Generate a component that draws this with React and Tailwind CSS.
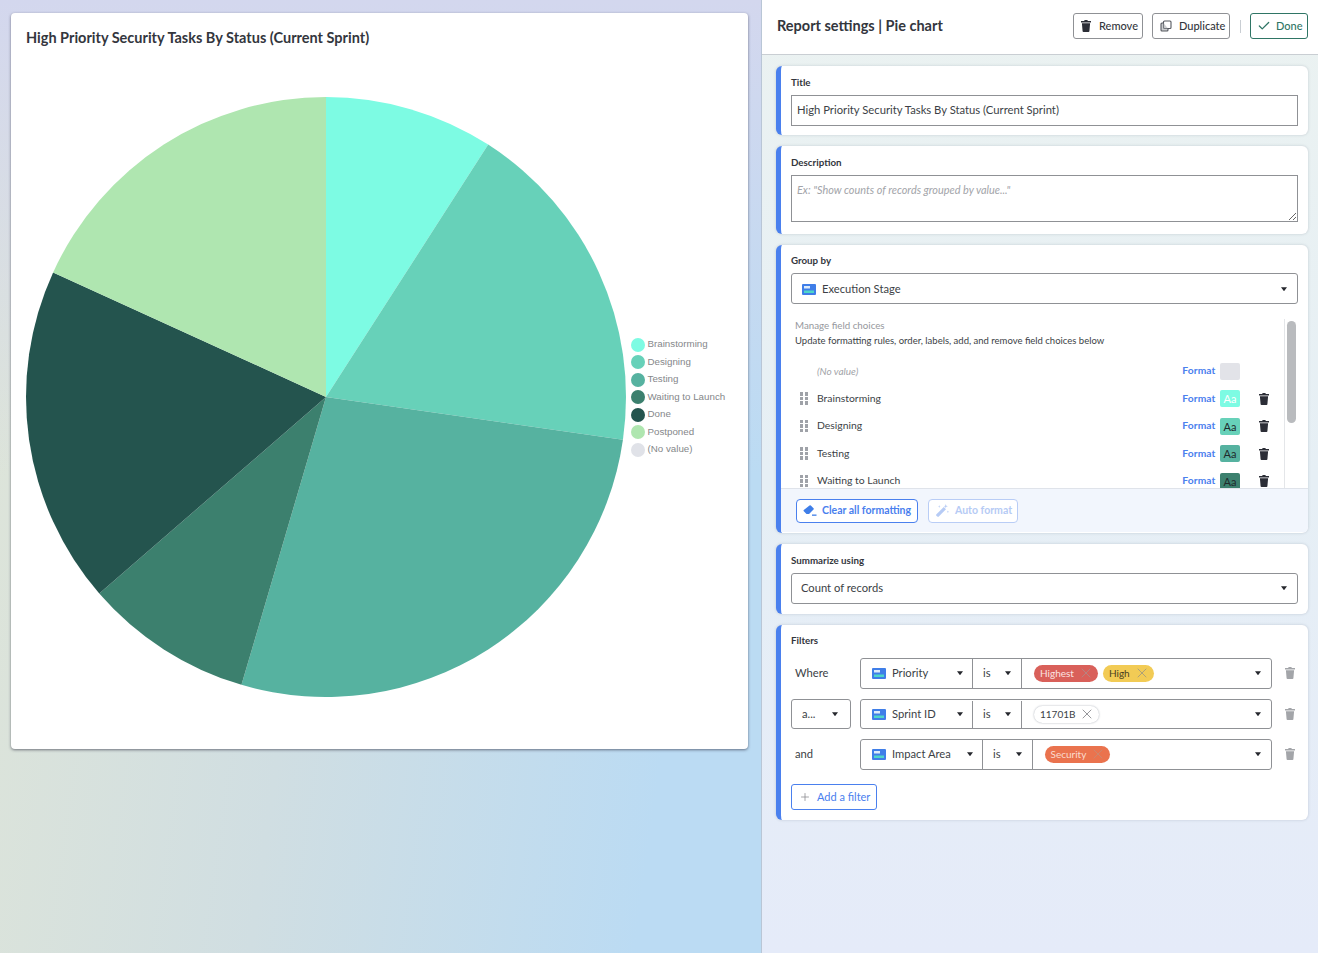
import React from "react";
import { Check, Plus, X } from "lucide-react";

const slices = [
  { v: 1, c: "#7DFBE3" },
  { v: 2, c: "#67D1B9" },
  { v: 3, c: "#56B2A0" },
  { v: 1, c: "#3C806E" },
  { v: 2, c: "#24544E" },
  { v: 2, c: "#AFE6B0" },
];
const legend = [
  ["Brainstorming", "bg-[#7DFBE3]"],
  ["Designing", "bg-[#67D1B9]"],
  ["Testing", "bg-[#56B2A0]"],
  ["Waiting to Launch", "bg-[#3C806E]"],
  ["Done", "bg-[#24544E]"],
  ["Postponed", "bg-[#AFE6B0]"],
  ["(No value)", "bg-[#E0E2E8]"],
];

function Pie() {
  const total = slices.reduce((a, s) => a + s.v, 0);
  let acc = 0;
  const pt = (t) => {
    const a = (t / total) * 2 * Math.PI;
    return [300 + 300 * Math.sin(a), 300 - 300 * Math.cos(a)];
  };
  return (
    <svg width="600" height="600" viewBox="0 0 600 600" className="shrink-0">
      {slices.map((s, i) => {
        const [x1, y1] = pt(acc);
        acc += s.v;
        const [x2, y2] = pt(acc);
        const large = s.v / total > 0.5 ? 1 : 0;
        return <path key={i} d={`M300 300L${x1} ${y1}A300 300 0 ${large} 1 ${x2} ${y2}Z`} fill={s.c} />;
      })}
    </svg>
  );
}

function Trash({ className }) {
  return (
    <svg viewBox="0 0 10 12" className={className} fill="currentColor">
      <path d="M3.6 0h2.8l.4.9H10v1.5H0V.9h3.2z" />
      <path d="M.9 3.2h8.2l-.7 8a.9.9 0 0 1-.9.8H2.5a.9.9 0 0 1-.9-.8z" />
    </svg>
  );
}

function FieldIcon() {
  return (
    <svg viewBox="0 0 14 11" className="w-[14px] h-[11px] shrink-0">
      <rect width="14" height="11" rx="1" fill="#3F7EE8" />
      <rect x="2" y="2" width="6" height="2.5" fill="#DCEBFA" />
      <rect x="2" y="6.5" width="10" height="2.5" fill="#4FD6C8" />
    </svg>
  );
}

function Caret({ className = "" }) {
  return (
    <svg viewBox="0 0 6 4" className={"w-[6px] h-[4px] shrink-0 " + className}>
      <path d="M0 0.3h6L3.4 3.7a.5.5 0 0 1-.8 0z" fill="#26282e" />
    </svg>
  );
}

function Drag() {
  return (
    <div className="grid grid-cols-2 gap-x-[2px] gap-y-[1px] w-[8px] shrink-0">
      {[0, 1, 2, 3, 4, 5].map((i) => (
        <div key={i} className="w-[3px] h-[3.4px] bg-[#9fa2a8]" />
      ))}
    </div>
  );
}

function Label({ children }) {
  return <div className="-mt-[1px] h-[14px] leading-[14px] text-[9.75px] font-bold text-[#33363d]">{children}</div>;
}

function Card({ className = "", children }) {
  return (
    <section
      className={
        "bg-white rounded-[6px] border-l-[5px] border-[#4A80EE] shadow-[0_0_3px_rgba(60,70,90,0.22)] overflow-hidden shrink-0 " +
        className
      }
    >
      {children}
    </section>
  );
}

function Select({ children, lower }) {
  return (
    <div className={"mt-[6px] h-[30.5px] mr-[10px] ml-[10px] border border-[#8f9195] rounded-[3px] flex items-center pl-[9px] pr-[10px] text-[11.2px] text-[#3c3f46] " + (lower ? "pt-[2px]" : "")}>
      {children}
      <Caret className="ml-auto" />
    </div>
  );
}

function Row({ name, swatch, text, muted, noDelete }) {
  return (
    <div className="h-[27.5px] flex items-center text-[10.4px] text-[#3c3f46]">
      {muted ? <div className="w-[8px] ml-[9px]" /> : <div className="ml-[9px]"><Drag /></div>}
      <div className={"ml-[9px] " + (muted ? "italic text-[#a2a4a9] text-[10px]" : "")}>{name}</div>
      <div className="ml-auto text-[#4A80EE] font-bold text-[10.25px] tracking-[0.1px]">Format</div>
      <div
        className={
          "ml-[4.5px] w-[20px] h-[17px] rounded-[2px] flex items-center justify-center text-[11px] leading-none " + swatch + " " + text
        }
      >
        {muted ? "" : "Aa"}
      </div>
      <div className="ml-[19px] w-[10px] mr-[15px]">{noDelete ? null : <Trash className="w-[10px] h-[12px] text-[#2b2d36]" />}</div>
    </div>
  );
}

function Pill({ bg, text, x, children, border }) {
  return (
    <div className={"h-[17px] rounded-full flex items-center pl-[6px] pr-[4px] text-[10px] gap-[4px] " + bg + " " + text + " " + (border || "")}>
      <span>{children}</span>
      <X className={"w-[16px] h-[16px] " + x} strokeWidth={1.3} />
    </div>
  );
}

function FilterRow({ lead, field, w1, w2, children, lower }) {
  return (
    <div className="flex items-center h-[30.5px] text-[11.2px] text-[#3c3f46]">
      <div className="w-[60px] mr-[9px] shrink-0 h-full">{lead}</div>
      <div className={"flex-1 h-full flex border border-[#8f9195] rounded-[3px] " + (lower ? "pt-[1px]" : "")}>
        <div className={"flex items-center pl-[11px] pr-[9px] gap-[6px] border-r border-[#8f9195] " + w1}>
          <FieldIcon />
          <span>{field}</span>
          <Caret className="ml-auto" />
        </div>
        <div className={"flex items-center pl-[10px] pr-[10px] border-r border-[#8f9195] " + w2}>
          <span>is</span>
          <Caret className="ml-auto" />
        </div>
        <div className="flex-1 flex items-center pl-[12px] pr-[10px] gap-[5px]">
          {children}
          <Caret className="ml-auto" />
        </div>
      </div>
      <div className="w-[26px] pl-[13px] shrink-0">
        <Trash className="w-[10px] h-[12px] text-[#a3a5a9]" />
      </div>
    </div>
  );
}

export default function App() {
  return (
    <div className="h-screen w-full flex overflow-hidden font-[Lato,sans-serif] bg-[linear-gradient(180deg,#d3d7ee_0%,rgba(211,215,238,0)_50%),linear-gradient(98deg,#dfe5d8_0,#d0dee2_380px,#bbdbf3_761px)]">
      <main className="w-[761px] shrink-0 pl-[11px] pt-[13px]">
        <div className="w-[737px] h-[736px] bg-white rounded-[4px] shadow-[0_1px_3px_rgba(40,40,60,0.6)] pl-[15px] pt-[15px]">
          <h1 className="h-[20px] leading-[20px] text-[14.5px] font-bold text-[#33363d] mb-[49px]">
            High Priority Security Tasks By Status (Current Sprint)
          </h1>
          <div className="flex items-center gap-[5px]">
            <Pie />
            <div className="flex flex-col font-['Liberation_Sans',sans-serif] text-[9.75px] text-[#85878a]">
              {legend.map(([n, c]) => (
                <div key={n} className="h-[17.5px] flex items-center gap-[2.5px]">
                  <div className={"w-[14px] h-[14px] rounded-full " + c} />
                  <span>{n}</span>
                </div>
              ))}
            </div>
          </div>
        </div>
      </main>

      <aside className="flex-1 border-l border-[#b9c6d6] flex flex-col bg-[linear-gradient(180deg,#ebf2f1_0%,#e6eff5_50%,#e5ebf9_100%)]">
        <header className="h-[55px] shrink-0 bg-white border-b border-[#c9ced3] flex items-center pl-[15px] pr-[10px] pb-[2px]">
          <h2 className="text-[14.5px] font-bold text-[#33363d]">Report settings | Pie chart</h2>
          <div className="ml-auto flex items-center text-[11px] font-medium text-[#33363d]">
            <button className="h-[26px] w-[70px] border border-[#8f9195] rounded-[3px] flex items-center pl-[7px] gap-[8px]">
              <Trash className="w-[10px] h-[12px] text-[#2b2d36]" />
              Remove
            </button>
            <button className="ml-[9px] h-[26px] w-[78px] border border-[#8f9195] rounded-[3px] flex items-center pl-[7px] gap-[7px]">
              <svg viewBox="0 0 12 12" className="w-[12px] h-[12px]" fill="none" stroke="#55585f" strokeWidth="1.1">
                <rect x="3.5" y="1" width="7.5" height="7.5" rx="1" />
                <path d="M3.5 3H2a1 1 0 0 0-1 1v6a1 1 0 0 0 1 1h5a1 1 0 0 0 1-1V8.5" fill="#9a9da2" fillOpacity="0.5" />
              </svg>
              Duplicate
            </button>
            <div className="ml-[10px] w-px h-[13px] bg-[#c9ced3]" />
            <button className="ml-[9px] h-[26px] w-[58px] border border-[#2F7565] text-[#2F7565] rounded-[3px] flex items-center pl-[6px] gap-[5px]">
              <Check className="w-[14px] h-[14px]" strokeWidth={2.2} />
              Done
            </button>
          </div>
        </header>

        <div className="flex flex-col gap-[11px] pt-[11px] pl-[14px] pr-[10px]">
          <Card className="h-[69px] pt-[10px]">
            <div className="pl-[10px]"><Label>Title</Label></div>
            <input
              readOnly
              value="High Priority Security Tasks By Status (Current Sprint)"
              className="mt-[6px] ml-[10px] block w-[507px] h-[30.5px] border border-[#8f9195] px-[5px] pb-[1px] text-[11.25px] text-[#3c3f46] outline-none"
            />
          </Card>

          <Card className="h-[88px] pt-[10px]">
            <div className="pl-[10px]"><Label>Description</Label></div>
            <textarea
              readOnly
              placeholder={'Ex: "Show counts of records grouped by value..."'}
              className="mt-[6px] ml-[10px] block w-[507px] h-[47px] border border-[#8f9195] px-[5px] py-[7px] text-[10.9px] leading-[14px] placeholder:italic placeholder:text-[#a2a4a9] outline-none"
            />
          </Card>

          <Card className="h-[288px] pt-[9px]">
            <div className="pl-[10px]"><Label>Group by</Label></div>
            <Select lower>
              <div className="ml-[1px]"><FieldIcon /></div>
              <span className="ml-[6px]">Execution Stage</span>
            </Select>
            <div className="mt-[15.5px] ml-[10px] mr-[10px] h-[169px] flex overflow-hidden">
              <div className="flex-1">
                <div className="pl-[4px] h-[12px] leading-[12px] text-[9.75px] text-[#96989d]">Manage field choices</div>
                <div className="pl-[4px] mt-[4px] h-[12px] leading-[12px] text-[9.5px] text-[#3c3f46]">
                  Update formatting rules, order, labels, add, and remove field choices below
                </div>
                <div className="mt-[10.25px]">
                  <Row name="(No value)" swatch="bg-[#E2E3E8]" text="" muted noDelete />
                  <Row name="Brainstorming" swatch="bg-[#7DFBE3]" text="text-white" />
                  <Row name="Designing" swatch="bg-[#67D1B9]" text="text-[#1f2a2c]" />
                  <Row name="Testing" swatch="bg-[#56B2A0]" text="text-[#1f2a2c]" />
                  <Row name="Waiting to Launch" swatch="bg-[#3C806E]" text="text-[#1f2a2c]" />
                </div>
              </div>
              <div className="w-[14px] shrink-0 border-l border-[#e4e6e9] pl-[2px] pt-[2px]">
                <div className="w-[9px] h-[102px] rounded-full bg-[#b9bbbe]" />
              </div>
            </div>
            <div className="h-[44px] bg-[#F2F6FD] border-t border-[#dfe3ea] pt-[9.5px] pl-[15px] flex items-start gap-[10px] text-[10.5px] font-bold">
              <button className="h-[24px] w-[122px] border border-[#4A80EE] rounded-[4px] bg-white text-[#4A80EE] flex items-center pl-[6px] gap-[5px]">
                <svg viewBox="0 0 14 12" className="w-[14px] h-[12px]" fill="#3F7EE8">
                  <path d="M6.5 0.5a1 1 0 0 1 1.3 0l2.7 2.7a1 1 0 0 1 0 1.4L6 9H3.5L0.8 6.3a1 1 0 0 1 0-1.4z" />
                  <rect x="9" y="9.5" width="4.5" height="1.3" />
                </svg>
                Clear all formatting
              </button>
              <button className="h-[24px] w-[90px] border border-[#b9cdf6] rounded-[4px] bg-white text-[#b6cbf5] flex items-center pl-[7px] gap-[6px] font-bold">
                <svg viewBox="0 0 12 12" className="w-[13px] h-[13px]" fill="#b6cbf5">
                  <path d="M7.2 2.8l2 2-6.6 6.8a1 1 0 0 1-1.4 0l-.8-.8a1 1 0 0 1 0-1.4z" />
                  <path d="M9 0l.5 1.5L11 2l-1.5.5L9 4l-.5-1.5L7 2l1.5-.5zM3 1l.3 1 1 .3-1 .3L3 3.6l-.3-1-1-.3 1-.3zM11 6l.3.9.7.3-.7.3-.3.9-.3-.9-.7-.3.7-.3z" />
                </svg>
                Auto format
              </button>
            </div>
          </Card>

          <Card className="h-[70px] pt-[10px]">
            <div className="pl-[10px]"><Label>Summarize using</Label></div>
            <Select>
              <span>Count of records</span>
            </Select>
          </Card>

          <Card className="h-[195px] pt-[9px] pl-[10px] pr-[10px]">
            <Label>Filters</Label>
            <div className="mt-[11px] flex flex-col gap-[10px]">
              <FilterRow lead={<div className="h-full flex items-center pl-[4px] pt-[1px]">Where</div>} field="Priority" w1="w-[112px]" w2="w-[49px]">
                <Pill bg="bg-[#D9605A]" text="text-[#fbe3e1]" x="text-[#b08a88]">Highest</Pill>
                <Pill bg="bg-[#F2CB55]" text="text-[#4a4020]" x="text-[#a39a7c]">High</Pill>
              </FilterRow>
              <FilterRow
                lower
                lead={
                  <div className="h-full border border-[#8f9195] rounded-[3px] flex items-center pl-[10px] pr-[12px] pt-[1px]">
                    a...
                    <Caret className="ml-auto" />
                  </div>
                }
                field="Sprint ID"
                w1="w-[112px]"
                w2="w-[49px]"
              >
                <Pill bg="bg-white" text="text-[#3c3f46]" x="text-[#85878b]" border="shadow-[0_0_2px_rgba(60,70,90,0.45)]">11701B</Pill>
              </FilterRow>
              <FilterRow lead={<div className="h-full flex items-center pl-[4px] pt-[1px]">and</div>} field="Impact Area" w1="w-[122px]" w2="w-[49.5px]">
                <Pill bg="bg-[#EA734E]" text="text-[#fbdccf]" x="text-[#c98a73]">Security</Pill>
              </FilterRow>
            </div>
            <button className="mt-[14.5px] h-[26px] w-[86px] border border-[#4A80EE] rounded-[3px] flex items-center pl-[7px] gap-[6px] text-[11px] text-[#4A80EE]">
              <Plus className="w-[12px] h-[12px] text-[#85878b]" strokeWidth={1.5} />
              Add a filter
            </button>
          </Card>
        </div>
      </aside>
    </div>
  );
}
